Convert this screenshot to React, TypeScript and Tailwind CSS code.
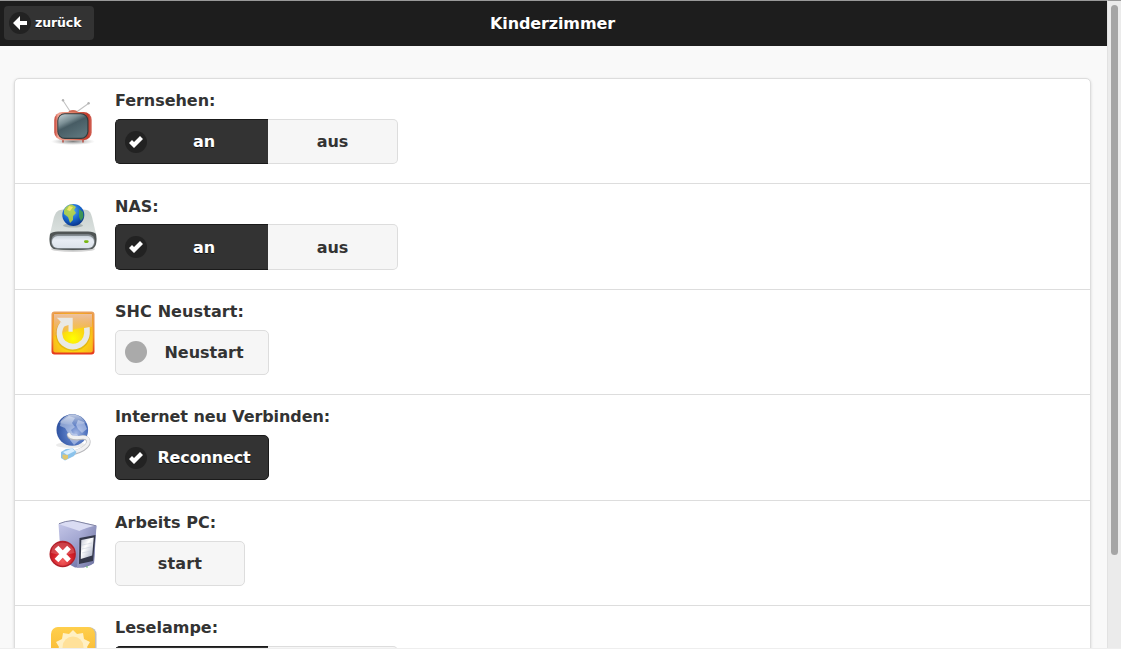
import React from "react";

function TvIcon() {
  return (
    <svg width="56" height="56" viewBox="0 0 56 56">
      <defs>
        <linearGradient id="tvBody" x1="0" x2="1">
          <stop offset="0" stopColor="#c23a2c" />
          <stop offset=".1" stopColor="#f0a595" />
          <stop offset=".5" stopColor="#e08068" />
          <stop offset=".9" stopColor="#c0392b" />
          <stop offset="1" stopColor="#d4675a" />
        </linearGradient>
        <linearGradient id="tvScreen" x1="0" y1="0" x2=".6" y2="1">
          <stop offset="0" stopColor="#c3d0d4" />
          <stop offset=".35" stopColor="#7b8f95" />
          <stop offset=".52" stopColor="#475c64" />
          <stop offset="1" stopColor="#5b737a" />
        </linearGradient>
        <radialGradient id="tvShadow">
          <stop offset="0" stopColor="#555" stopOpacity=".75" />
          <stop offset="1" stopColor="#999" stopOpacity="0" />
        </radialGradient>
      </defs>
      <ellipse cx="28" cy="47.500" rx="22" ry="3.600" fill="url(#tvShadow)" />
      <path d="M18 6.500L25.500 18M43.500 9.500L31.500 18" stroke="#c2c2c2" strokeWidth="1.100" fill="none" />
      <circle cx="18" cy="6.300" r="1.200" fill="#b4b4b4" />
      <circle cx="43.600" cy="9.200" r="1.200" fill="#b4b4b4" />
      <path d="M23 19Q23.500 16 28 16t5 3z" fill="#cf6a54" />
      <path d="M18 45.500v3M38 45.500v3" stroke="#b6463a" strokeWidth="1.400" />
      <rect x="9.300" y="18" width="37.400" height="28.200" rx="8" fill="url(#tvBody)" />
      <rect x="12.300" y="19.200" width="31.200" height="25.800" rx="7.500" fill="#333c3e" />
      <rect x="13.300" y="20.200" width="29" height="23.600" rx="6.500" fill="url(#tvScreen)" />
    </svg>
  );
}

function NasIcon() {
  return (
    <svg width="56" height="56" viewBox="0 0 56 56">
      <defs>
        <linearGradient id="nasBody" x1="0" y1="0" x2="0" y2="1">
          <stop offset="0" stopColor="#c6cecb" />
          <stop offset=".55" stopColor="#dae0de" />
          <stop offset="1" stopColor="#8d9593" />
        </linearGradient>
        <linearGradient id="nasFront" x1="0" y1="0" x2="0" y2="1">
          <stop offset="0" stopColor="#c9d2da" />
          <stop offset=".35" stopColor="#e8edf4" />
          <stop offset="1" stopColor="#dce3eb" />
        </linearGradient>
        <radialGradient id="nasGlobe" cx=".4" cy=".3" r=".75">
          <stop offset="0" stopColor="#65b8fa" />
          <stop offset=".55" stopColor="#1767cf" />
          <stop offset="1" stopColor="#082f82" />
        </radialGradient>
      </defs>
      <ellipse cx="28" cy="50" rx="22" ry="3" fill="#aaa" opacity=".5" />
      <path d="M15 11Q28 8 42 11Q45.500 12 47 18L51.500 37Q52.500 48 47.500 50Q28 52.500 8.500 50Q3.500 48 4.500 37L9 18Q11 12 15 11z" fill="url(#nasBody)" />
      <path d="M5 35Q7 32.500 13 32.500H43Q49 32.500 51 35Q53 47 47 50Q28 52 9 50Q3 47 5 35z" fill="#505555" />
      <rect x="6.200" y="35.300" width="43.600" height="14.400" rx="6.500" fill="#858d92" />
      <rect x="7" y="37" width="42" height="12" rx="5.700" fill="url(#nasFront)" />
      <ellipse cx="28" cy="26.500" rx="10" ry="2" fill="#586765" opacity=".35" />
      <circle cx="28.300" cy="16" r="11" fill="url(#nasGlobe)" />
      <path d="M19 11Q22 5.500 27 5.500L31 8L29 11L31 14L28 17L28 21L25 24L23 18L19 15z" fill="#bed839" opacity=".85" />
      <path d="M34 10L38 13L38.500 18L36 22L34 18z" fill="#48a43d" opacity=".8" />
      <path d="M24 7l4 1-3 4-3-1z" fill="#f2e766" />
      <rect x="39" y="41.200" width="4.600" height="2.800" rx="1.400" fill="#79b714" />
    </svg>
  );
}

function RestartIcon() {
  return (
    <svg width="56" height="56" viewBox="0 0 56 56">
      <defs>
        <linearGradient id="reBorder" x1="0" y1="0" x2="0" y2="1">
          <stop offset="0" stopColor="#e9a25f" />
          <stop offset=".6" stopColor="#f08a28" />
          <stop offset="1" stopColor="#e5371c" />
        </linearGradient>
        <radialGradient id="reFill" cx=".5" cy=".65" r=".75">
          <stop offset="0" stopColor="#ffff00" />
          <stop offset=".3" stopColor="#fce010" />
          <stop offset=".75" stopColor="#f8b81c" />
          <stop offset="1" stopColor="#f09a2d" />
        </radialGradient>
        <linearGradient id="reShine" x1="0" y1="0" x2="0" y2="1">
          <stop offset="0" stopColor="#edc2a0" />
          <stop offset="1" stopColor="#efa75b" stopOpacity=".4" />
        </linearGradient>
      </defs>
      <rect x="6.500" y="6.500" width="43" height="43" rx="3" fill="url(#reBorder)" />
      <rect x="8.300" y="8" width="39.500" height="39.500" rx="2" fill="url(#reFill)" />
      <path d="M9 9H47V22Q35 21 9 31z" fill="url(#reShine)" />
      <path d="M16.500 19.500C11 27 13 36 18 40Q26 46 35 42Q44 37 43 24" fill="none" stroke="#8a5414" strokeWidth="5" opacity=".2" />
      <path d="M18 18.500C12.500 25 14 34 18.500 38Q26 44 34.500 40Q43.500 35 41.800 22.500" fill="none" stroke="#e9e9e5" strokeWidth="5.600" />
      <path d="M11.800 12.700H27.700V26.700H23.500V20L19 21.500L16 17z" fill="#e9e9e5" />
    </svg>
  );
}

function InternetIcon() {
  return (
    <svg width="56" height="56" viewBox="0 0 56 56">
      <defs>
        <radialGradient id="inetGlobe" cx=".62" cy=".6" r=".75">
          <stop offset="0" stopColor="#a5b8e4" />
          <stop offset=".4" stopColor="#5578c2" />
          <stop offset="1" stopColor="#204494" />
        </radialGradient>
        <linearGradient id="inetShine" x1="0" y1="0" x2="0" y2="1">
          <stop offset="0" stopColor="#fff" stopOpacity=".7" />
          <stop offset="1" stopColor="#fff" stopOpacity=".08" />
        </linearGradient>
      </defs>
      <ellipse cx="26" cy="35" rx="15" ry="3" fill="#999" opacity=".2" />
      <circle cx="27.300" cy="20" r="15.800" fill="url(#inetGlobe)" />
      <path d="M16 11L24 6L30 8L27 13L30 17L26 20L28 24L23 23L20 18L15 16z" fill="#d8e1f4" opacity=".5" />
      <path d="M33 10L39 12L42 19L37 23L33 19L31 15zM25 23L32 24L36 29L29 35L25 30z" fill="#dbe4f8" opacity=".5" />
      <path d="M14 13Q20 4 28 4.500Q37 5 41 13Q30 17 14 13z" fill="url(#inetShine)" />
      <path d="M24 25Q25 29 34 28Q45 26 43 34Q40 40 28 43" fill="none" stroke="#b5b6ba" strokeWidth="4.500" strokeLinecap="round" />
      <path d="M24 24.500Q25 28 34 27.500Q45 25.500 43 33.500Q40 39.500 28 42.500" fill="none" stroke="#f1f1f2" strokeWidth="3.200" strokeLinecap="round" />
      <path d="M16 42L21 39L28 38.500L31.500 42L29 46L20 50.500L16 48z" fill="#8cc3eb" />
      <path d="M18 42L27 38.500L30 41L22 45z" fill="#d9efff" />
      <path d="M17.500 44.500L23 45L23 48.500L20 50L17.500 48z" fill="#dfc66f" />
    </svg>
  );
}

function ComputerIcon() {
  return (
    <svg width="56" height="56" viewBox="0 0 56 56">
      <defs>
        <linearGradient id="pcSide" x1="0" y1="0" x2=".5" y2="1">
          <stop offset="0" stopColor="#c8caea" />
          <stop offset=".5" stopColor="#a5a9d3" />
          <stop offset="1" stopColor="#7578ac" />
        </linearGradient>
        <linearGradient id="pcFront" x1="0" y1="0" x2="1" y2="1">
          <stop offset="0" stopColor="#b4b7df" />
          <stop offset="1" stopColor="#6d729f" />
        </linearGradient>
        <radialGradient id="pcBadge" cx=".5" cy=".8" r=".8">
          <stop offset="0" stopColor="#f35d5d" />
          <stop offset=".55" stopColor="#d3202a" />
          <stop offset="1" stopColor="#b00b17" />
        </radialGradient>
        <linearGradient id="pcScreen" x1="0" y1="0" x2="1" y2="1">
          <stop offset="0" stopColor="#bcc0cf" />
          <stop offset=".4" stopColor="#fff" />
          <stop offset="1" stopColor="#9ba4bc" />
        </linearGradient>
      </defs>
      <path d="M13.500 8Q20 5 28 4.300L51.500 9.500L50.500 17L49 47L39 51.500H30L16 44z" fill="url(#pcSide)" />
      <path d="M13.500 8Q20 5 28 4.300L51.500 9.500Q43 12 34.500 15z" fill="#dadcf3" />
      <path d="M14 7.700Q20 5 28 4.500L51 9.800" stroke="#777b99" strokeWidth=".9" fill="none" />
      <path d="M34.500 15Q42 11 51.500 9.800L49 47Q44 51.500 32 51.700z" fill="url(#pcFront)" />
      <path d="M34.500 22L50.500 19L48 45L34 48z" fill="#34384a" />
      <path d="M36.300 24L48.700 21.500L47.200 39.500L35.800 43z" fill="url(#pcScreen)" />
      <path d="M37 29l10-2M37 33l9-2M37 37l9-2" stroke="#c5cad8" strokeWidth=".5" />
      <circle cx="42" cy="51" r=".8" fill="#58bd5c" />
      <circle cx="17.700" cy="38" r="13.200" fill="#b3202a" />
      <circle cx="17.700" cy="38" r="11.800" fill="url(#pcBadge)" />
      <path d="M6 37Q7 26 18 26.500Q28 27 29.500 37Q18 40 6 37z" fill="#f19a9a" opacity=".35" />
      <path d="M11.500 31.500L24 44.500M24 31.500L11.500 44.500" stroke="#fff" strokeWidth="5.200" />
    </svg>
  );
}

function LampIcon() {
  return (
    <svg width="56" height="56" viewBox="0 0 56 56">
      <defs>
        <linearGradient id="lampFill" x1="0" y1="0" x2="0" y2="1">
          <stop offset="0" stopColor="#ffcf4c" />
          <stop offset="1" stopColor="#f5af28" />
        </linearGradient>
      </defs>
      <rect x="7.500" y="6.200" width="44" height="44" rx="7" fill="#999" opacity=".65" />
      <rect x="6" y="6" width="44" height="44" rx="7" fill="url(#lampFill)" />
      <path d="M28 9l4 4 6-1 1 6 6 3-3 5 3 6-6 3-1 6H18l-1-6-6-3 3-6-3-5 6-3 1-6 6 1z" fill="#fff0c4" />
      <circle cx="28" cy="26" r="10.500" fill="#ffe19a" />
    </svg>
  );
}

function CheckDisc() {
  return (
    <span className="flex size-[22px] shrink-0 items-center justify-center rounded-full bg-[#222]">
      <svg width="14" height="14" viewBox="0 0 14 14">
        <path d="M14 4L11 1L5 7L3 5L0 8L5 13z" fill="#fff" />
      </svg>
    </span>
  );
}

type Choice = { text: string; width: string; active?: boolean; disc?: boolean; spacing?: string };
type Item = {
  label: string;
  icon: React.ReactNode;
  height: string;
  choices: Choice[];
  tall?: boolean;
  spacing?: string;
};

const on: Choice = { text: "an", width: "w-[153px]", active: true, disc: true };
const off: Choice = { text: "aus", width: "w-[130px]" };

const items: Item[] = [
  { label: "Fernsehen:", icon: <TvIcon />, height: "h-[105px]", choices: [on, off], spacing: "tracking-[-0.05px]" },
  { label: "NAS:", icon: <NasIcon />, height: "h-[106px]", choices: [on, off], tall: true },
  {
    label: "SHC Neustart:",
    icon: <RestartIcon />,
    height: "h-[105px]",
    choices: [{ text: "Neustart", width: "w-[154px]", disc: true }],
    spacing: "tracking-[0.1px]",
  },
  {
    label: "Internet neu Verbinden:",
    icon: <InternetIcon />,
    height: "h-[106px]",
    choices: [{ text: "Reconnect", width: "w-[154px]", active: true, disc: true, spacing: "tracking-[-0.15px]" }],
    spacing: "tracking-[-0.09px]",
  },
  {
    label: "Arbeits PC:",
    icon: <ComputerIcon />,
    height: "h-[105px]",
    choices: [{ text: "start", width: "w-[130px]", spacing: "tracking-[0.15px]" }],
    spacing: "tracking-[0.06px]",
  },
  { label: "Leselampe:", icon: <LampIcon />, height: "h-[106px]", choices: [on, off] },
];

function Choices({ choices, tall }: { choices: Choice[]; tall?: boolean }) {
  return (
    <div className={`flex ${tall ? "h-[46px]" : "h-[45px]"}`}>
      {choices.map((c, i) => (
        <button
          key={c.text}
          className={`flex h-full items-center border font-bold ${c.width} ${
            c.active
              ? "border-[#1a1a1a] bg-[#333] text-white [text-shadow:0_1px_0_#111]"
              : "border-[#ddd] bg-[#f6f6f6] text-[#333] [text-shadow:0_1px_0_#f3f3f3]"
          } ${i === 0 ? "rounded-l-[5px]" : "border-l-0"} ${i === choices.length - 1 ? "rounded-r-[5px]" : "border-r-0"} ${
            c.disc ? "pl-[9px]" : ""
          } ${c.active ? "" : "pb-px"}`}
        >
          {c.disc && (c.active ? <CheckDisc /> : <span className="size-[22px] shrink-0 rounded-full bg-[#aaa]" />)}
          <span className={`flex-1 text-center leading-5 ${c.spacing ?? ""} ${c.disc ? "pr-[7px]" : ""} ${tall ? "pt-0.5" : "pt-px"}`}>
            {c.text}
          </span>
        </button>
      ))}
    </div>
  );
}

export default function App() {
  return (
    <div className="flex h-[649px] w-[1121px] overflow-hidden border-b border-[#eee] bg-[#f9f9f9] font-['DejaVu_Sans',sans-serif] text-base text-[#333]">
      <div className="flex w-[1107px] flex-col overflow-hidden">
        <header className="grid h-[46px] shrink-0 grid-cols-[94px_1fr_94px] items-start border-t border-[#999] bg-[#1d1d1d] text-white">
          <button className="ml-1 mt-[5px] flex h-[34px] w-[90px] items-center gap-[4px] rounded bg-[#333] pl-[5px] text-[12.5px] font-bold tracking-[-0.1px] [text-shadow:0_1px_0_#111]">
            <span className="flex size-[22px] items-center justify-center rounded-full bg-[#222]">
              <svg width="14" height="14" viewBox="0 0 14 14">
                <path d="M7 14V9H14V5H7V0L0 7z" fill="#fff" />
              </svg>
            </span>
            zurück
          </button>
          <h1 className="pr-[2px] pt-[13px] text-center font-bold leading-5 tracking-[-0.12px] [text-shadow:0_1px_0_#111]">Kinderzimmer</h1>
        </header>
        <main className="px-[14px] pt-8">
          <ul className="w-[1077px] rounded-t-[5px] border border-[#ddd] bg-white shadow-[0_1px_3px_rgba(0,0,0,.15)]">
            {items.map((item) => (
              <li key={item.label} className={`flex border-b border-[#ddd] pl-[30px] ${item.height}`}>
                <div className="mr-[14px] w-14 shrink-0 pt-[15px]">{item.icon}</div>
                <div className={item.tall ? "pt-[13px]" : "pt-3"}>
                  <h2 className={`h-5 font-bold leading-5 ${item.spacing ?? ""} ${item.tall ? "mb-[7px]" : "mb-2"}`}>{item.label}</h2>
                  <Choices choices={item.choices} tall={item.tall} />
                </div>
              </li>
            ))}
          </ul>
        </main>
      </div>
      <div className="w-[14px] border-l border-t border-l-[#e2e2e2] border-t-[#999] bg-[#ebebeb] pl-[3px] pt-1">
        <div className="h-[550px] w-[7px] rounded-full bg-[#a5a5a5]" />
      </div>
    </div>
  );
}
